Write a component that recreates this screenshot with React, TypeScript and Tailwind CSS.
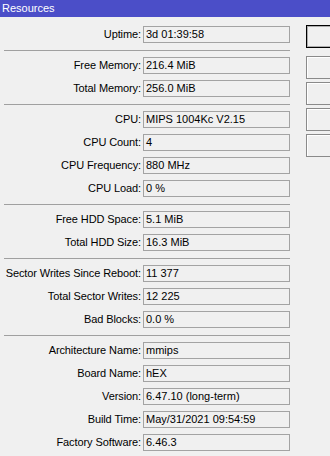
import React from "react";

type Row = { label: string; value: string };

const groups: Row[][] = [
    [{ label: "Uptime", value: "3d 01:39:58" }],
    [
        { label: "Free Memory", value: "216.4 MiB" },
        { label: "Total Memory", value: "256.0 MiB" },
    ],
    [
        { label: "CPU", value: "MIPS 1004Kc V2.15" },
        { label: "CPU Count", value: "4" },
        { label: "CPU Frequency", value: "880 MHz" },
        { label: "CPU Load", value: "0 %" },
    ],
    [
        { label: "Free HDD Space", value: "5.1 MiB" },
        { label: "Total HDD Size", value: "16.3 MiB" },
    ],
    [
        { label: "Sector Writes Since Reboot", value: "11 377" },
        { label: "Total Sector Writes", value: "12 225" },
        { label: "Bad Blocks", value: "0.0 %" },
    ],
    [
        { label: "Architecture Name", value: "mmips" },
        { label: "Board Name", value: "hEX" },
        { label: "Version", value: "6.47.10 (long-term)" },
        { label: "Build Time", value: "May/31/2021 09:54:59" },
        { label: "Factory Software", value: "6.46.3" },
    ],
];

function Field({ label, value }: Row) {
    return (
        <div className="flex items-center h-[17px]">
            <div className="w-[143px] shrink-0 text-right pr-[2px] whitespace-nowrap tracking-[-0.1px]">{label}:</div>
            <div className="w-[147px] h-[17px] border border-[#a3a3a3] bg-[#f0f0f0] pl-[2px] leading-[15px] whitespace-nowrap overflow-hidden">
                {value}
            </div>
        </div>
    );
}

export default function App() {
    return (
        <div
            className="w-[330px] h-[456px] bg-[#f0f0f0] overflow-hidden text-[11px] text-black"
            style={{ fontFamily: '"Liberation Sans", Arial, sans-serif' }}
        >
            <div className="h-[17px] bg-[#4b4ec8] text-white text-[11px] leading-[17px] pl-[2px]">Resources</div>

            <div className="flex">
                <div className="w-[290px] pt-[9px] flex flex-col gap-[6px]">
                    {groups.map((group, gi) => (
                        <React.Fragment key={gi}>
                            {gi > 0 && <div className="ml-[4px] mt-[1px] h-[1px] bg-[#a0a0a0]" />}
                            {group.map((row) => (
                                <Field key={row.label} {...row} />
                            ))}
                        </React.Fragment>
                    ))}
                </div>

                <div className="ml-[16px] pt-[8px] flex flex-col gap-[3px]">
                    <div className="w-[40px] h-[23px] border border-black bg-[#f0f0f0] shadow-[inset_0_0_0_1px_#adadad] mb-[5px]" />
                    <div className="w-[40px] h-[23px] border border-[#8a8a8a] bg-[#f0f0f0] shadow-[inset_1px_1px_0_#fff]" />
                    <div className="w-[40px] h-[23px] border border-[#8a8a8a] bg-[#f0f0f0] shadow-[inset_1px_1px_0_#fff]" />
                    <div className="w-[40px] h-[23px] border border-[#8a8a8a] bg-[#f0f0f0] shadow-[inset_1px_1px_0_#fff]" />
                    <div className="w-[40px] h-[23px] border border-[#8a8a8a] bg-[#f0f0f0] shadow-[inset_1px_1px_0_#fff]" />
                </div>
            </div>
        </div>
    );
}
